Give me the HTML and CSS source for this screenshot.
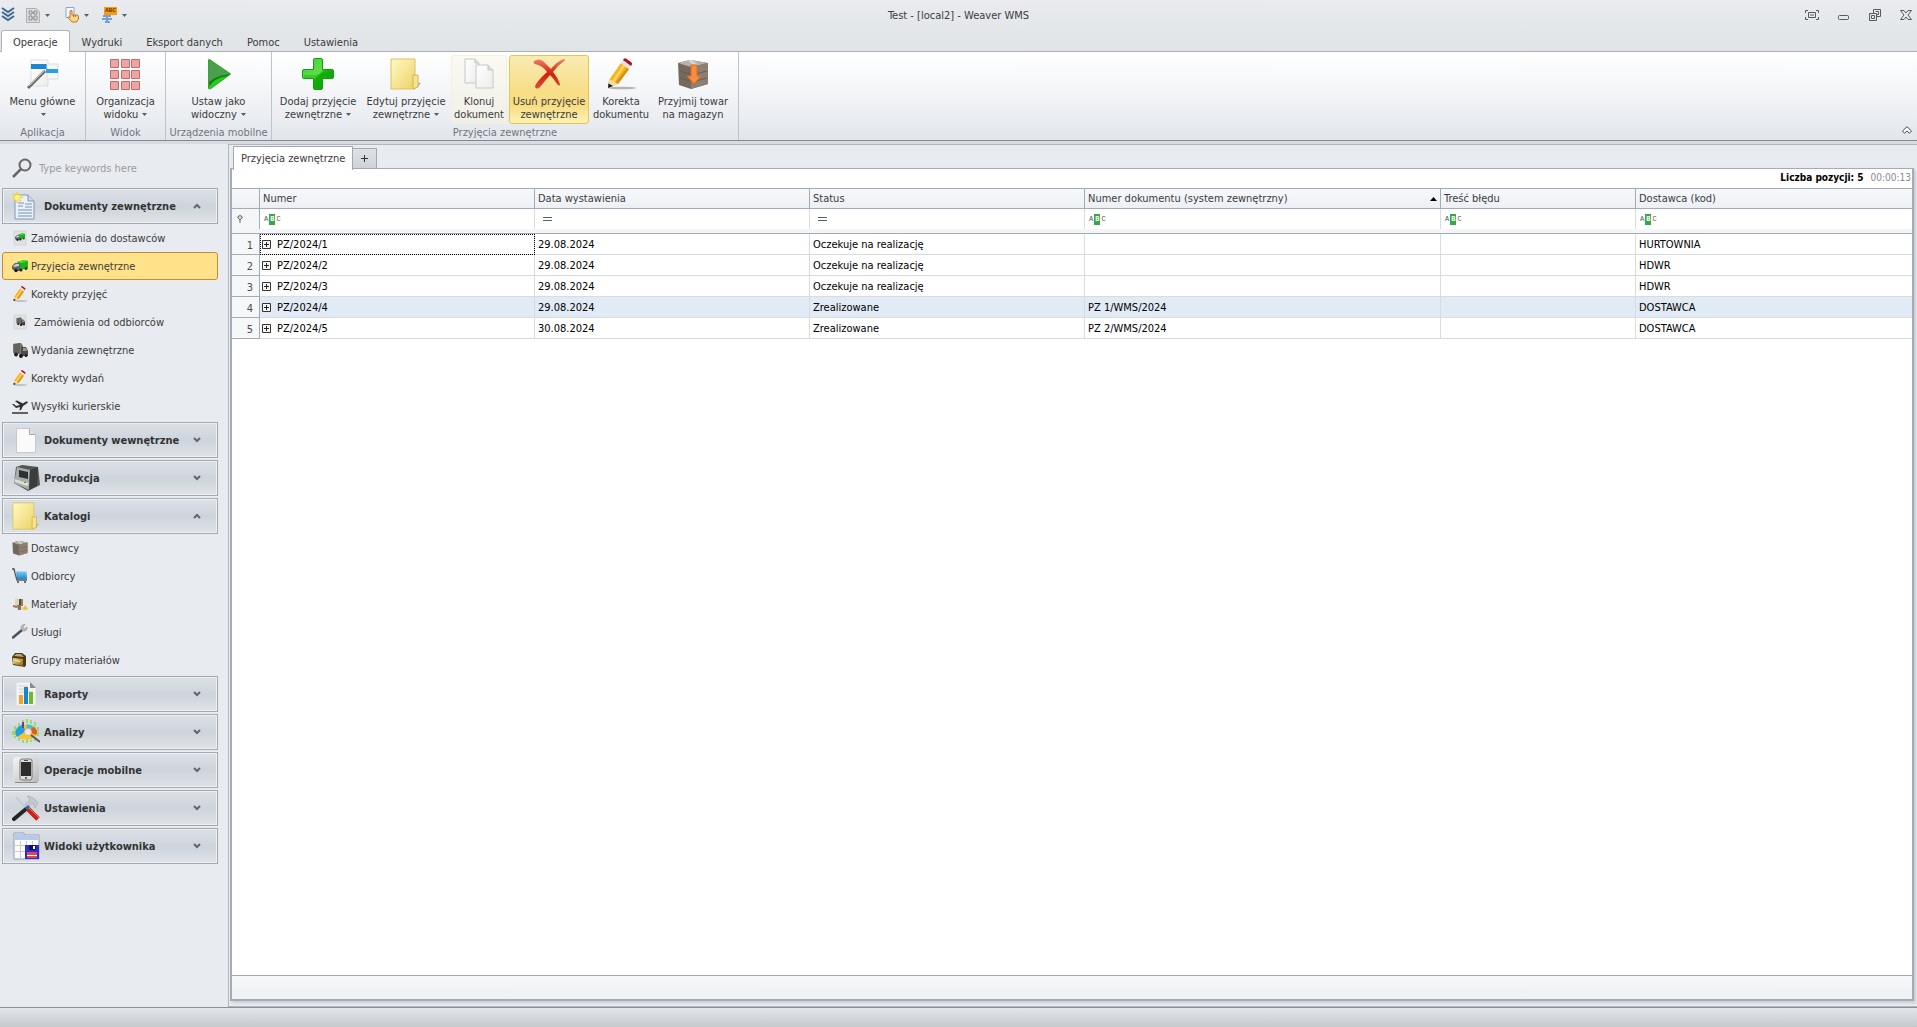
FILE: index.html
```html
<!DOCTYPE html>
<html lang="pl">
<head>
<meta charset="utf-8">
<title>Test - [local2] - Weaver WMS</title>
<link rel="stylesheet" href="styles.css">
</head>
<body>
<svg class="defs" aria-hidden="true">
  <defs>
    <linearGradient id="gGreen" x1="0" y1="0" x2="1" y2="1"><stop offset="0" stop-color="#3bd52c"/><stop offset=".5" stop-color="#5fdc4a"/><stop offset=".55" stop-color="#16b70c"/><stop offset="1" stop-color="#0c9a06"/></linearGradient>
    <linearGradient id="gFolder" x1="0" y1="0" x2="1" y2="1"><stop offset="0" stop-color="#fffac2"/><stop offset="1" stop-color="#eed268"/></linearGradient>
    <linearGradient id="gRed" x1="0" y1="0" x2="0" y2="1"><stop offset="0" stop-color="#f0806a"/><stop offset=".5" stop-color="#d01f0e"/><stop offset="1" stop-color="#e04a3a"/></linearGradient>
    <linearGradient id="gPage" x1="0" y1="0" x2="1" y2="1"><stop offset="0" stop-color="#ffffff"/><stop offset="1" stop-color="#ececec"/></linearGradient>
    <linearGradient id="gBlue" x1="0" y1="0" x2="0" y2="1"><stop offset="0" stop-color="#9adcff"/><stop offset="1" stop-color="#1b8fcd"/></linearGradient>
    <linearGradient id="gGold" x1="0" y1="0" x2="1" y2="1"><stop offset="0" stop-color="#f7dc8a"/><stop offset="1" stop-color="#8f6113"/></linearGradient>
    <linearGradient id="gGrey" x1="0" y1="0" x2="1" y2="1"><stop offset="0" stop-color="#f4f4f4"/><stop offset="1" stop-color="#b9b9b9"/></linearGradient>
  </defs>
  <symbol id="pencil" viewBox="0 0 32 32">
    <ellipse cx="17" cy="30" rx="14" ry="1.3" fill="#9a9a9a" opacity=".7"/>
    <path d="M4 22 16 5 24 11 13 26 3 30z" fill="#f6b420"/>
    <path d="M7 23 18 7 20 8 9 25z" fill="#ffd65c"/><path d="M10 25 22 10 24 11 13 26z" fill="#d98f10"/>
    <path d="M4 21 13 26 3 30z" fill="#f3dcae"/><path d="M3.500 25.500 8 28 3 30z" fill="#161616"/>
    <path d="M16 5 18 2 26 8 24 11z" fill="#e4e4e4"/><path d="M18 2Q19-.5 21 .5L26 4Q28 5.500 26 8z" fill="#a81420"/>
  </symbol>
  <symbol id="folder" viewBox="0 0 32 32">
    <path d="M26 24l5 1-4 5z" fill="#b4b8bd"/>
    <path d="M1 1H25V31H1z" fill="url(#gFolder)" stroke="#dcc168"/>
    <path d="M23 17h5v12l-5 2z" fill="#f8e48e" stroke="#d4b450"/>
  </symbol>
  <symbol id="truck" viewBox="0 0 16 16">
    <path d="M5 4 12 2 16 3V10L8 12z" fill="#18b414"/><path d="M5 4 12 2 16 3 9 5z" fill="#42de32"/>
    <path d="M0 8 3 5 8 5V13L3 13 0 11z" fill="#59636a"/><path d="M1 8 4 6 7 6V8L2 9z" fill="#c4ced4"/>
    <circle cx="4" cy="12.500" r="1.800" fill="#222"/><circle cx="9" cy="12" r="1.500" fill="#222"/><circle cx="14" cy="10.500" r="1.500" fill="#333"/>
  </symbol>
  <symbol id="lorry" viewBox="0 0 16 16">
    <path d="M1 2 9 1 11 4V13L1 11z" fill="#6c6963"/><path d="M1 2 9 1 9 12 1 11z" fill="#7f7b73"/>
    <path d="M3 2V11M5 2V11M7 1V11" stroke="#4c4a46"/><path d="M9 5 14 5 16 9V14L9 14z" fill="#4c4c4c"/><path d="M11 6 14 6 15 9H11z" fill="#9a9a9a"/>
    <circle cx="4" cy="12.500" r="2" fill="#222"/><circle cx="9" cy="14" r="2" fill="#181818"/><circle cx="14" cy="13.500" r="1.500" fill="#222"/>
  </symbol>
  <symbol id="crate" viewBox="0 0 32 32">
    <path d="M1 5 13 2 31 5V26L14 31 2 27z" fill="#74695d"/><path d="M1 5 13 2 31 5 14 9z" fill="#b9b2a8"/><path d="M14 9 31 5V26L14 31z" fill="#8d8072"/>
    <path d="M3 13 13 16M3 20 13 23M15 17 30 13M15 24 30 20" stroke="#6a5e50" fill="none"/><path d="M11 2.500 17 8 21 7 15 2z" fill="#dad5cc"/>
  </symbol>
  <symbol id="chevUp" viewBox="0 0 8 6"><path d="M1 5 4 2 7 5" fill="none" stroke="#5e6670" stroke-width="2"/></symbol>
  <symbol id="chevDown" viewBox="0 0 8 6"><path d="M1 1 4 4 7 1" fill="none" stroke="#5e6670" stroke-width="2"/></symbol>
  <symbol id="caret" viewBox="0 0 5 3"><path d="M0 0H5L2.500 3z" fill="#5a5e64"/></symbol>
  <symbol id="expand" viewBox="0 0 9 9"><path d="M.5.5h8v8h-8z" fill="#f4f4f4" stroke="#333"/><path d="M2 4.500h5M4.500 2v5" stroke="#222"/></symbol>
</svg>

<header class="top">
  <div class="titlebar">
    <div class="quick">
      <button class="qbtn" aria-label="Aplikacja"><svg width="14" height="16" viewBox="0 0 14 16"><path d="M1 1 7 5 13 1M1 5 7 9 13 5M1 9 7 13 13 9" fill="none" stroke="#3f6797" stroke-width="2"/></svg></button>
      <button class="qbtn q-grid" aria-label="Widok"><svg width="14" height="15" viewBox="0 0 14 15"><path d="M.5.500h10l3 3v11h-13z" fill="#dcdddd" stroke="#b0b0b0"/><path d="M3 3h3v3H3zM8 3h3v3H8zM3 8h3v4H3zM8 8h3v4H8zM6 5h2M6 10h2" fill="none" stroke="#8d8d8d"/></svg><svg width="5" height="3"><use href="#caret"/></svg></button>
      <button class="qbtn q-hand" aria-label="Dotyk"><svg width="14" height="16" viewBox="0 0 14 16"><path d="M1 .5h8v10H1z" fill="#f4f8fd" stroke="#8da6c8"/><path d="M5 4q1-1.500 2 0v4h5q1.500 0 1.500 2v2l-2 3H7L3 10.500q0-1.500 2 0z" fill="#fdd48c" stroke="#b8782a"/><path d="M8.500 8v2M10.500 8v2" stroke="#b8782a"/></svg><svg width="5" height="3"><use href="#caret"/></svg></button>
      <button class="qbtn q-lang" aria-label="Tłumaczenie"><span class="lang"><span class="lang-abc">ABC</span><svg width="10" height="8" viewBox="0 0 10 8"><path d="M1 1h3M6 1h3M0 4h4M6 4h4M3 7h1M6 7h2M5 0v8" stroke="#4c86d0" stroke-width="1.500"/></svg></span><svg width="5" height="3"><use href="#caret"/></svg></button>
    </div>
    <div class="title">Test - [local2] - Weaver WMS</div>
    <div class="winbtns">
      <button aria-label="Pełny ekran"><svg width="14" height="10" viewBox="0 0 14 10" fill="none" stroke="#555b63"><path d="M3 .5H.5V3M11 .5h2.500V3M3 9.500H.5V7M11 9.500h2.500V7M3.500 2.500h7v5h-7zM5 5h4"/></svg></button>
      <button aria-label="Minimalizuj"><svg width="12" height="10" viewBox="0 0 12 10" fill="none" stroke="#555b63"><rect x=".5" y="5.500" width="10" height="4" rx="1"/></svg></button>
      <button aria-label="Przywróć"><svg width="12" height="12" viewBox="0 0 12 12" fill="none" stroke="#555b63"><path d="M4.500 4V.5h7v7H8M.5 4.500h7v7h-7zM2.500 6.500h3v3h-3zM6.500 2.500h3v3H8"/></svg></button>
      <button aria-label="Zamknij"><svg width="12" height="10" viewBox="0 0 12 10" fill="none" stroke="#555b63"><path d="M.5.500h3.500L6 3 8 .5h3.500L8 5l3.500 4.500H8L6 7 4 9.500H.5L4 5z"/></svg></button>
    </div>
  </div>
  <nav class="menu">
    <button class="mtab active">Operacje</button>
    <button class="mtab">Wydruki</button>
    <button class="mtab">Eksport danych</button>
    <button class="mtab">Pomoc</button>
    <button class="mtab">Ustawienia</button>
  </nav>
</header>

<section class="ribbon">
  <div class="group g-app">
    <div class="btns">
      <button class="rbtn"><svg width="32" height="32" viewBox="0 0 32 32"><path d="M4 2h17v26H4z" fill="url(#gPage)" stroke="#ddd"/><path d="M4 6h17v5H4z" fill="#1b87d3"/><path d="M20 6h11v15H20z" fill="#f6f6f6" stroke="#ddd"/><path d="M19 11h12v4H19z" fill="#26a0e6"/><path d="M1 30 18 13" stroke="#6d6d6d" stroke-width="3"/><path d="M2 28 17 13" stroke="#c9c9c9"/></svg><span>Menu główne<br><svg width="5" height="3"><use href="#caret"/></svg></span></button>
    </div>
    <div class="glabel">Aplikacja</div>
  </div>
  <div class="group g-view">
    <div class="btns">
      <button class="rbtn"><svg width="32" height="32" viewBox="0 0 32 32" fill="#efa3a3" stroke="#bb6f6a"><path d="M1.500 1.500h8v8h-8zM12.500 1.500h8v8h-8zM22.500 1.500h8v8h-8zM1.500 12.500h8v8h-8zM12.500 12.500h8v8h-8zM22.500 12.500h8v8h-8zM1.500 23.500h8v8h-8zM12.500 23.500h8v8h-8zM22.500 23.500h8v8h-8z"/></svg><span>Organizacja<br>widoku <svg width="5" height="3"><use href="#caret"/></svg></span></button>
    </div>
    <div class="glabel">Widok</div>
  </div>
  <div class="group g-mobile">
    <div class="btns">
      <button class="rbtn"><svg width="32" height="32" viewBox="0 0 32 32"><path d="M5 2q1-2 3 0l19 13q2 1 0 2L8 31q-3 1-3-1z" fill="#37a535"/><path d="M6 3 27 16Q10 20 6 24z" fill="#4c9f4f"/><path d="M6 24Q12 18 27 16L7 30z" fill="#0b8609"/><path d="M6 29q5-9 18-11L7 31z" fill="#27cf1d"/></svg><span>Ustaw jako<br>widoczny <svg width="5" height="3"><use href="#caret"/></svg></span></button>
    </div>
    <div class="glabel">Urządzenia mobilne</div>
  </div>
  <div class="group g-docs">
    <div class="btns">
      <button class="rbtn w-l"><svg width="32" height="32" viewBox="0 0 32 32"><path d="M11.500 2q0-1.500 1.500-1.500h6q1.500 0 1.500 1.500v9.500H30q1.500 0 1.500 1.500v6q0 1.500-1.500 1.500h-9.500V30q0 1.500-1.500 1.500h-6q-1.500 0-1.500-1.500v-9.500H2Q.5 20.500.5 19v-6q0-1.500 1.500-1.500h9.500z" fill="url(#gGreen)" stroke="#159c10"/><path d="M2 17q14 1 28-4v6H20v11h-8V20H2z" fill="#08a404" opacity=".35"/></svg><span>Dodaj przyjęcie<br>zewnętrzne <svg width="5" height="3"><use href="#caret"/></svg></span></button>
      <button class="rbtn w-l"><svg width="32" height="32"><use href="#folder"/></svg><span>Edytuj przyjęcie<br>zewnętrzne <svg width="5" height="3"><use href="#caret"/></svg></span></button>
      <button class="rbtn w-xs faded"><svg width="32" height="32" viewBox="0 0 32 32" fill="url(#gPage)" stroke="#c4c8cc"><path d="M2 1h10l4 4v20H2z"/><path d="M12 1v4h4" fill="#ddd"/><path d="M13 7h12l5 5v18H13z"/><path d="M25 7v5h5" fill="#ddd"/></svg><span>Klonuj<br>dokument</span></button>
      <button class="rbtn w-m hot"><svg width="32" height="32" viewBox="0 0 32 32"><path d="M1 3Q6 0 10 3 15 8 18 11 23 4 31 1 33 1 31 3 24 8 20 14 25 20 27 26 27 29 24 26 21 21 17 17 11 24 7 29 4 32 2 29 2 25 14 14 9 7 2 6 0 5 1 3z" fill="url(#gRed)"/></svg><span>Usuń przyjęcie<br>zewnętrzne</span></button>
      <button class="rbtn w-s"><svg width="32" height="32"><use href="#pencil"/></svg><span>Korekta<br>dokumentu</span></button>
      <button class="rbtn w-m"><svg width="32" height="32" viewBox="0 0 32 32"><use href="#crate" width="32" height="32"/><path d="M14 7h6v11h4l-7 8-7-8h4z" fill="#f78d3e" stroke="#d96a22"/></svg><span>Przyjmij towar<br>na magazyn</span></button>
    </div>
    <div class="glabel">Przyjęcia zewnętrzne</div>
  </div>
  <button class="collapse" aria-label="Zwiń wstążkę"><svg width="10" height="8" viewBox="0 0 10 8"><path d="M.5 5 5 .700 9.500 5 7.500 7.300 5 5 2.500 7.300z" fill="#fff" stroke="#444b55"/></svg></button>
</section>

<div class="work">
  <aside class="side">
    <label class="search"><svg width="20" height="20" viewBox="0 0 20 20" fill="none" stroke="#666"><circle cx="13" cy="7" r="5.500" stroke-width="2"/><path d="M9 11 1 19" stroke-width="2.500"/></svg><input type="search" placeholder="Type keywords here" aria-label="Szukaj"></label>

    <button class="shead"><svg width="28" height="28" viewBox="0 0 28 28"><path d="M3 3h13l6 6v18H3z" fill="#eaf1fb" stroke="#7f95b4"/><path d="M16 3v6h6" fill="#cddbee" stroke="#7f95b4"/><path d="M6 11h6M6 14h5M13 12h7M13 15h7M6 18h14M6 21h14M6 24h14" stroke="#9fb2cc" stroke-width="1.500"/><path d="M5 0v11M0 5.500h11M1 1.500l8 8M9 1.500l-8 8" stroke="#f5d535" stroke-width="1.500"/><circle cx="5" cy="5.500" r="2.500" fill="#fff38a"/></svg><span>Dokumenty zewnętrzne</span><svg class="chev" width="8" height="6"><use href="#chevUp"/></svg></button>
    <nav class="items">
      <a href="#"><svg width="16" height="16" viewBox="0 0 16 16"><path d="M2 1h12v14H2z" fill="#dfe1e3" stroke="#d2d5d8"/><use href="#truck" x="3" y="2" width="10" height="10"/></svg>Zamówienia do dostawców</a>
      <a href="#" class="sel"><svg width="16" height="16"><use href="#truck"/></svg>Przyjęcia zewnętrzne</a>
      <a href="#"><svg width="16" height="16"><use href="#pencil"/></svg>Korekty przyjęć</a>
      <a href="#" class="wide"><svg width="16" height="16" viewBox="0 0 16 16"><path d="M2 1h12v14H2z" fill="#dfe1e3" stroke="#d2d5d8"/><use href="#lorry" x="4" y="3" width="9" height="9"/></svg>Zamówienia od odbiorców</a>
      <a href="#"><svg width="16" height="16"><use href="#lorry"/></svg>Wydania zewnętrzne</a>
      <a href="#"><svg width="16" height="16"><use href="#pencil"/></svg>Korekty wydań</a>
      <a href="#"><svg width="16" height="16" viewBox="0 0 16 16"><path d="M0 15h16" stroke="#333" stroke-width="1.500"/><path d="M0 6 2 6 4 8 8 7 3 3 5 2.500 11 5.500 14 3.500Q16.500 3 15.500 5L11 8 9 12 7.500 12.500 8 9 4 10z" fill="#2e2e2e"/></svg>Wysyłki kurierskie</a>
    </nav>
    <button class="shead"><svg width="28" height="28" viewBox="0 0 28 28"><path d="M4.500 2.500h13l6 6v18h-19z" fill="#fafafa" stroke="#c8c8c8"/><path d="M17.500 2.500v6h6" fill="#e2e2e2" stroke="#aaa"/></svg><span>Dokumenty wewnętrzne</span><svg class="chev" width="8" height="6"><use href="#chevDown"/></svg></button>
    <button class="shead"><svg width="28" height="28" viewBox="0 0 28 28"><path d="M4 3 10 1 26 3 28 21 16 27 2 19z" fill="#555"/><path d="M5 3 18 6 17 26 2 19z" fill="#a9acad"/><path d="M18 6 26 3 25 22 17 26z" fill="#3b3c3e"/><path d="M7 6 16 8V15L7 13z" fill="#2c3033"/><path d="M2 15 17 19 15 22 3 18z" fill="#dedede"/><path d="M9 17h2v1H9z" fill="#d6cf1e"/><path d="M12 18h2v1h-2z" fill="#2ea92e"/></svg><span>Produkcja</span><svg class="chev" width="8" height="6"><use href="#chevDown"/></svg></button>
    <button class="shead"><svg width="28" height="28"><use href="#folder"/></svg><span>Katalogi</span><svg class="chev" width="8" height="6"><use href="#chevUp"/></svg></button>
    <nav class="items">
      <a href="#"><svg width="16" height="16"><use href="#crate"/></svg>Dostawcy</a>
      <a href="#"><svg width="16" height="16" viewBox="0 0 16 16"><path d="M0 1h2l3 11h10" fill="none" stroke="#555" stroke-width="1.500"/><path d="M3 3 15 3.500 15 11H5z" fill="url(#gBlue)"/><path d="M6 4v7M9 4v7M12 4v7" stroke="#2277a8" stroke-width=".5"/><circle cx="6" cy="14" r="1" fill="#444"/><circle cx="13" cy="14" r="1" fill="#444"/></svg>Odbiorcy</a>
      <a href="#"><svg width="16" height="16" viewBox="0 0 16 16"><path d="M3 3 6 2 8 11 3 12z" fill="#e2d3b8"/><path d="M7 3h3v7H7z" fill="#176b3c"/><path d="M9 3h2v7H9z" fill="#c9654a"/><path d="M1 9 5 10 5 12 1 11z" fill="#ba6a42"/><path d="M5 9h4v5H6z" fill="#777"/><path d="M9 11h3v3H9z" fill="#d8d8d8"/><path d="M11 13 13 9 16 13q-3 2-5 0z" fill="#f0c41b"/></svg>Materiały</a>
      <a href="#"><svg width="16" height="16" viewBox="0 0 16 16"><path d="M1 13.500 10 6" stroke="#4e5254" stroke-width="2.500" stroke-linecap="round"/><path d="M15 3 12 5 11 3 13 .5Q9 0 9 4.500 10 8 13 7 16 6 15 3z" fill="#b9bdbf" stroke="#85898c" stroke-width=".5"/></svg>Usługi</a>
      <a href="#"><svg width="16" height="16" viewBox="0 0 16 16"><path d="M0 5 3 1H10L14 4V13L13 15 1 13z" fill="#4d3a14"/><path d="M1 6 11 7V14L1 12z" fill="url(#gGold)"/><path d="M4 2H9L12 5 2 4z" fill="#b9a67c"/><path d="M3 8l5 1v1L3 9z" fill="#fff2c4"/></svg>Grupy materiałów</a>
    </nav>
    <button class="shead"><svg width="28" height="28" viewBox="0 0 28 28"><path d="M4 2h14l6 6v18H4z" fill="#f3f3f3" stroke="#d9d9d9"/><path d="M18 2v6h6z" fill="#8b8b8b"/><path d="M7 6h9M7 9h9M7 12h14" stroke="#d0d0d0"/><path d="M7 15h4v9H7z" fill="#f7a220"/><path d="M12 7h4v17h-4z" fill="#1685d2"/><path d="M17 12h4v12h-4z" fill="#6fb829"/></svg><span>Raporty</span><svg class="chev" width="8" height="6"><use href="#chevDown"/></svg></button>
    <button class="shead"><svg width="28" height="28" viewBox="0 0 28 28"><path d="M3 8v12M7 5v18M11 2v23M15 1v24M19 2v22M23 4v19M26 9v9M1 13v5" stroke="#83dd3c" stroke-width="1.500" stroke-dasharray="4 1"/><ellipse cx="14" cy="14" rx="11" ry="7.500" fill="#f6c62c"/><path d="M14 13 5 19Q0 12 10 6.500z" fill="#1da2e3"/><path d="M14 13 15 6.500Q20 7 22 9z" fill="#2fc0ee"/><path d="M15 13 22 9Q27 13 24 17z" fill="#e5571a"/><path d="M10 4h2v6h-2z" fill="#703a9a"/><circle cx="16" cy="14" r="3.500" fill="#f8e4da" stroke="#e8b07a"/><path d="M19 17 28 24" stroke="#55585c" stroke-width="2"/></svg><span>Analizy</span><svg class="chev" width="8" height="6"><use href="#chevDown"/></svg></button>
    <button class="shead"><svg width="28" height="28" viewBox="0 0 28 28"><rect x="1" y="1" width="26" height="26" rx="4" fill="url(#gGrey)"/><path d="M3 26.500h22" stroke="#8e8e8e"/><rect x="8" y="3" width="12" height="21" rx="2" fill="#ddd" stroke="#777"/><path d="M9 6h10v14H9z" fill="#2b2d2f"/><path d="M12 4.500h4" stroke="#555"/><circle cx="14" cy="22" r="1" fill="#444"/></svg><span>Operacje mobilne</span><svg class="chev" width="8" height="6"><use href="#chevDown"/></svg></button>
    <button class="shead"><svg width="28" height="28" viewBox="0 0 28 28"><path d="M4 3 15 15" stroke="#c7ccd0" stroke-width="2"/><path d="M2 25 14 15" stroke="#252525" stroke-width="4" stroke-linecap="round"/><path d="M15 2Q21 2 26 9L23 14 21 9 15 13 13 10 18 6z" fill="#c3c9ce" stroke="#98a0a6" stroke-width=".5"/><path d="M14 15 17 12" stroke="#2b6bab" stroke-width="3"/><path d="M16 15 26 25" stroke="#c92118" stroke-width="5"/><path d="M17 14 27 24" stroke="#ee6c5c"/></svg><span>Ustawienia</span><svg class="chev" width="8" height="6"><use href="#chevDown"/></svg></button>
    <button class="shead"><svg width="28" height="28" viewBox="0 0 28 28"><path d="M2 1h10v2h15v24H2z" fill="#fbfbfb" stroke="#8fa0b5"/><path d="M3 2h9v2h14v4H3z" fill="#b5cbea"/><path d="M3 13.500h23M3 19.500h23M8.500 9v17M14.500 9v17M20.500 9v17" stroke="#c9cdd2"/><path d="M13 13h14v14H13z" fill="#2c2ccb"/><path d="M17 13h7v5h-7z" fill="#101060"/><path d="M21 14h2v3h-2z" fill="#fff"/><path d="M15 20h10v6H15z" fill="#e04652"/><path d="M15 23h10v1H15z" fill="#fff"/></svg><span>Widoki użytkownika</span><svg class="chev" width="8" height="6"><use href="#chevDown"/></svg></button>
  </aside>

  <main class="content">
    <div class="tabs">
      <button class="dtab active">Przyjęcia zewnętrzne</button>
      <button class="dtab plus" aria-label="Nowa karta"><svg width="7" height="7" viewBox="0 0 7 7"><path d="M0 3.500h7M3.500 0v7" stroke="#333"/></svg></button>
    </div>
    <div class="panel">
      <div class="info"><strong>Liczba pozycji: 5</strong><span>00:00:13</span></div>
      <table class="grid">
        <colgroup><col class="c-ind"><col class="c-std"><col class="c-std"><col class="c-std"><col class="c-doc"><col class="c-err"><col></colgroup>
        <thead>
          <tr class="heads"><th></th><th>Numer</th><th>Data wystawienia</th><th>Status</th><th><span class="sorted">Numer dokumentu (system zewnętrzny)<svg width="7" height="4" viewBox="0 0 7 4"><path d="M0 4h7L3.500 0z" fill="#000"/></svg></span></th><th>Treść błędu</th><th>Dostawca (kod)</th></tr>
          <tr class="filters">
            <td><svg width="6" height="8" viewBox="0 0 6 8"><path d="M1 1.500Q3-.5 5 1.500V3L3 5 1 3z" fill="#ddd" stroke="#666"/><path d="M3 5v3" stroke="#666"/></svg></td>
            <td><span class="abc">A<b>B</b>C</span></td>
            <td><svg class="eq" width="9" height="4" viewBox="0 0 9 4"><path d="M0 .5h9M0 3.500h9" stroke="#5c6066"/></svg></td>
            <td><svg class="eq" width="9" height="4" viewBox="0 0 9 4"><path d="M0 .5h9M0 3.500h9" stroke="#5c6066"/></svg></td>
            <td><span class="abc">A<b>B</b>C</span></td>
            <td><span class="abc">A<b>B</b>C</span></td>
            <td><span class="abc">A<b>B</b>C</span></td>
          </tr>
          <tr class="strip"><td colspan="7"></td></tr>
        </thead>
        <tbody>
          <tr><th>1</th><td class="focus"><svg width="9" height="9"><use href="#expand"/></svg>PZ/2024/1</td><td>29.08.2024</td><td>Oczekuje na realizację</td><td></td><td></td><td>HURTOWNIA</td></tr>
          <tr><th>2</th><td><svg width="9" height="9"><use href="#expand"/></svg>PZ/2024/2</td><td>29.08.2024</td><td>Oczekuje na realizację</td><td></td><td></td><td>HDWR</td></tr>
          <tr><th>3</th><td><svg width="9" height="9"><use href="#expand"/></svg>PZ/2024/3</td><td>29.08.2024</td><td>Oczekuje na realizację</td><td></td><td></td><td>HDWR</td></tr>
          <tr class="alt"><th>4</th><td><svg width="9" height="9"><use href="#expand"/></svg>PZ/2024/4</td><td>29.08.2024</td><td>Zrealizowane</td><td>PZ 1/WMS/2024</td><td></td><td>DOSTAWCA</td></tr>
          <tr><th>5</th><td><svg width="9" height="9"><use href="#expand"/></svg>PZ/2024/5</td><td>30.08.2024</td><td>Zrealizowane</td><td>PZ 2/WMS/2024</td><td></td><td>DOSTAWCA</td></tr>
        </tbody>
      </table>
      <div class="foot"></div>
    </div>
  </main>
</div>
<footer class="status"></footer>
</body>
</html>
```

FILE: styles.css
```css
* { box-sizing: border-box; }

body {
  margin: 0;
  min-height: 100vh;
  display: flex;
  flex-direction: column;
  background: #e8ebf0;
  color: #3b3b3b;
  font: 11px/13px "DejaVu Sans Condensed", "Noto Sans", sans-serif;
}

button {
  margin: 0;
  padding: 0;
  border: 0;
  background: none;
  color: inherit;
  font: inherit;
}

svg { display: block; flex: none; }
.defs { position: absolute; width: 0; height: 0; }

/* title bar and menu */
.top { background: linear-gradient(#e9ebef, #e0e4e6); }

.titlebar {
  display: grid;
  grid-template-columns: 1fr auto 1fr;
  align-items: center;
  height: 30px;
}

.quick { display: flex; align-items: center; padding-left: 1px; }
.qbtn { display: flex; align-items: center; gap: 5px; }
.q-grid { margin-left: 11px; }
.q-hand { margin-left: 15px; }
.q-lang { margin-left: 13px; }
.lang { display: flex; flex-direction: column; }
.lang-abc {
  margin-left: 2px;
  padding: 0 1px;
  background: #fb9b0c;
  color: #5a4010;
  font: bold 6px/8px "Liberation Mono", monospace;
}

.title { padding-top: 1px; }

.winbtns { display: flex; justify-content: flex-end; align-items: center; gap: 19px; padding-right: 5px; }

.menu { display: flex; height: 22px; padding-left: 1px; border-bottom: 1px solid #adafb5; }
.mtab { height: 22px; padding: 2px 11px 0; border: 1px solid transparent; border-bottom: 0; }
.mtab.active {
  border-color: #b0b3b9;
  border-radius: 3px 3px 0 0;
  background: #fff;
}

/* ribbon */
.ribbon {
  position: relative;
  display: flex;
  height: 89px;
  background: linear-gradient(#fff, #f2f4f7 50%, #e2e6eb);
  border-bottom: 1px solid #86888f;
}
.group { display: flex; flex-direction: column; border-right: 1px solid #bfc3ca; }
.g-app { width: 86px; }
.g-view { width: 80px; }
.g-mobile { width: 106px; }
.g-docs { width: 467px; }
.btns { display: flex; justify-content: center; gap: 2px; padding-top: 3px; }
.g-docs .btns { justify-content: flex-start; padding-left: 3px; }
.rbtn {
  display: flex;
  flex-direction: column;
  align-items: center;
  gap: 5px;
  height: 69px;
  padding-top: 2px;
  border: 1px solid transparent;
  border-radius: 3px;
  white-space: nowrap;
}
.rbtn span svg { display: inline-block; margin-left: 1px; vertical-align: 2px; }
.w-l { width: 86px; }
.w-m { width: 80px; }
.w-s { width: 60px; }
.w-xs { width: 56px; }
.faded { border-color: #f3f0dc; background: linear-gradient(#fbfaf2, #f1f0e8); }
.hot { border-color: #e7c64c; background: linear-gradient(#f9ebb4, #f7de88 50%, #f8dd85 75%, #fdf3b6); }
.glabel { margin-top: 2px; color: #71757f; text-align: center; }
.collapse { position: absolute; right: 5px; bottom: 6px; }

/* body of the window */
.work { flex: 1; display: flex; border-top: 3px solid #d9dce2; }
.side { width: 228px; padding: 0 10px 10px 2px; }
.search { display: flex; align-items: center; gap: 7px; height: 44px; padding: 4px 0 0 10px; }
.search input {
  width: 160px;
  padding: 0;
  border: 0;
  outline: 0;
  background: none;
  font: inherit;
}
.search input::placeholder { color: #9c9c9c; opacity: 1; }

.shead {
  display: flex;
  align-items: center;
  gap: 4px;
  width: 100%;
  height: 36px;
  margin-bottom: 2px;
  padding: 0 16px 0 9px;
  border: 1px solid #a2a9b1;
  box-shadow: inset 0 0 0 1px #eef1f4;
  background: linear-gradient(#dce1e7, #cdd4db 50%, #dfe3e8);
  font-weight: bold;
  color: #333;
}
.chev { margin-left: auto; }

.items { margin: -2px 0 2px; }
.items a {
  display: flex;
  align-items: center;
  gap: 3px;
  height: 28px;
  padding-left: 9px;
  border: 1px solid transparent;
  border-radius: 3px;
  color: inherit;
  text-decoration: none;
}
.items .wide { gap: 6px; }
.items .sel { border-color: #c98a3a; background: #ffe28a; }

.content {
  flex: 1;
  min-width: 0;
  display: flex;
  flex-direction: column;
  padding: 1px 3px 5px 1px;
  border: solid #b2b6bf;
  border-width: 1px 0 1px 1px;
}
.tabs { position: relative; z-index: 1; display: flex; align-items: flex-end; padding-left: 3px; }
.dtab { height: 21px; border: 1px solid #a2a9b4; }
.dtab.active {
  height: 24px;
  margin-bottom: -1px;
  padding: 0 7px;
  border-bottom: 0;
  background: #fff;
}
.dtab.plus {
  display: flex;
  align-items: center;
  justify-content: center;
  width: 24px;
  border-left: 0;
  background: linear-gradient(#dfe2e6, #cfd3d7);
}

.panel {
  flex: 1;
  display: flex;
  flex-direction: column;
  margin-top: -1px;
  border: 2px solid #a3abb5;
  border-top-width: 1px;
  background: #fff;
  box-shadow: 2px 2px 3px #c8ccd2;
}
.info {
  display: flex;
  justify-content: flex-end;
  gap: 7px;
  height: 19px;
  padding: 2px 1px 0 0;
  font-size: 10px;
  color: #8a8a8a;
}
.info strong { color: #000; }

.grid { width: 100%; table-layout: fixed; border-collapse: separate; border-spacing: 0; color: #000; }
.c-ind { width: 28px; }
.c-std { width: 275px; }
.c-doc { width: 356px; }
.c-err { width: 195px; }
.grid th { font-weight: normal; text-align: left; }
.grid th, .grid td { padding: 0 3px; border-right: 1px solid #d9dbdf; }
.grid tr > :last-child { border-right: 0; }

.heads th {
  height: 21px;
  border: solid #a3abb5;
  border-width: 1px 1px 1px 0;
  background: linear-gradient(#f7f8fa, #ecf0f5);
  color: #3b3b3b;
}
.sorted { display: flex; justify-content: space-between; align-items: center; }
.filters td { height: 20px; }
.grid .filters td:first-child { padding-left: 5px; background: #f5f6f8; border-right-color: #a3abb5; }
.grid .strip td { height: 5px; background: #f4f5f6; border-bottom: 1px solid #a3abb5; }

.abc {
  display: flex;
  align-items: center;
  gap: 1px;
  padding-left: 1px;
  color: #555;
  font: 7px/11px "Liberation Mono", monospace;
}
.abc b { padding: 0 1px; background: #3aa648; color: #fff; }
.eq { margin-left: 5px; }

.grid tbody td { height: 21px; border-bottom: 1px solid #d9dbdf; }
.grid tbody th {
  padding: 2px 6px 0 0;
  border-right-color: #a3abb5;
  border-bottom: 1px solid #a3abb5;
  background: #f5f7f9;
  color: #4c4c4c;
  text-align: right;
}
.grid tbody td:nth-child(2) { padding-left: 2px; }
.grid tbody td svg { display: inline-block; margin-right: 6px; vertical-align: -1px; }
.grid .alt td { background: #e1ebf5; }
.focus { outline: 1px dotted #000; outline-offset: -1px; }

.foot {
  height: 24px;
  margin-top: auto;
  border-top: 1px solid #a3a8b3;
  background: linear-gradient(#f7f8f8, #edf1f5);
}

.status {
  height: 20px;
  border-top: 1px solid #8c9098;
  background: linear-gradient(#e3e6ec, #c5c9cc);
}
```
